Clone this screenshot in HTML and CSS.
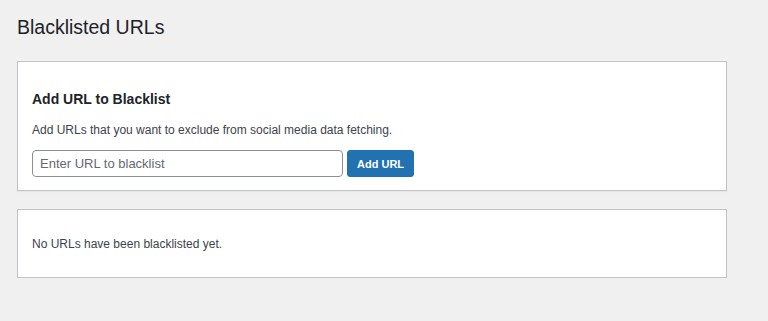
FILE: index.html
```html
<!DOCTYPE html>
<html lang="en">
<head>
    <meta charset="UTF-8">
    <meta name="viewport" content="width=device-width, initial-scale=1.0">
    <title>Blacklisted URLs</title>
    <link rel="stylesheet" href="styles.css">
</head>
<body>
    <div class="wrap">
        <h1 class="page-title">Blacklisted URLs</h1>

        <div class="card">
            <h2 class="card-title">Add URL to Blacklist</h2>
            <p class="card-text">Add URLs that you want to exclude from social media data fetching.</p>
            <form class="add-form" onsubmit="return false;">
                <input class="url-input" type="text" placeholder="Enter URL to blacklist">
                <button class="add-button" type="submit">Add URL</button>
            </form>
        </div>

        <div class="card card-list">
            <p class="card-text">No URLs have been blacklisted yet.</p>
        </div>
    </div>
</body>
</html>
```

FILE: styles.css
```css
:root {
    --page-bg: #f0f0f1;
    --border: #c3c4c7;
    --heading: #1d2327;
    --text: #3c434a;
    --blue: #2271b1;
}

* {
    margin: 0;
    padding: 0;
    box-sizing: border-box;
}

body {
    background: var(--page-bg);
    font-family: 'Liberation Sans', Arial, sans-serif;
    color: var(--text);
    font-size: 12px;
}

.wrap {
    padding: 13px 41px 0 17px;
}

.page-title {
    font-size: 19.5px;
    font-weight: 400;
    line-height: 28px;
    color: var(--heading);
}

.card {
    margin-top: 20px;
    background: #fff;
    border: 1px solid var(--border);
    box-shadow: 0 1px 1px rgba(0, 0, 0, 0.04);
    padding: 14px 14px 13px;
}

.card-title {
    margin: 13px 0 12px;
    font-size: 14px;
    font-weight: 700;
    line-height: 20px;
    color: var(--heading);
}

.card-text {
    line-height: 18px;
    margin-bottom: 11px;
}

.card-list {
    margin-top: 18px;
    padding: 12px 14px 11px;
}

.card-list .card-text {
    margin: 13px 0;
}

.add-form {
    display: flex;
    gap: 4px;
}

.url-input {
    width: 311px;
    height: 27px;
    padding: 0 7px;
    border: 1px solid #8c8f94;
    border-radius: 4px;
    font-family: inherit;
    font-size: 13px;
    color: var(--heading);
}

.url-input::placeholder {
    color: #646970;
}

.add-button {
    height: 27px;
    padding: 0 9px;
    background: var(--blue);
    border: 1px solid var(--blue);
    border-radius: 3px;
    color: #fff;
    font-family: inherit;
    font-size: 11px;
    font-weight: 700;
    cursor: pointer;
}
```
